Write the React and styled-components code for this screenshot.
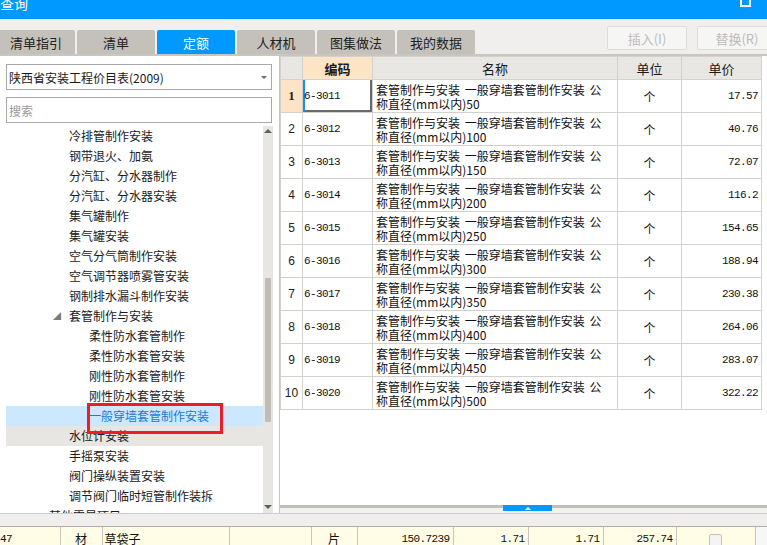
import React from 'react';
import styled, { createGlobalStyle } from 'styled-components';

const GlobalStyle = createGlobalStyle`
  html, body { margin: 0; padding: 0; width: 767px; height: 545px; overflow: hidden; background: #fff; }
  body { font-family: "Noto Sans CJK SC", "Noto Sans", sans-serif; font-size: 12px; color: #1a1a1a; }
  * { box-sizing: border-box; }
`;

const Window = styled.div`
  width: 767px; height: 545px; display: flex; flex-direction: column; overflow: hidden;
`;

const TitleBar = styled.div`
  flex: none; height: 19px; background: #0099ff; display: flex; justify-content: space-between;
  align-items: flex-start; overflow: hidden;
`;
const Title = styled.div`
  color: #fff; font-size: 14px; line-height: 14px; margin-top: -4px; margin-left: 0;
`;
const MaxIcon = styled.div`
  width: 11px; height: 10px; border: 2px solid #fff; margin-top: -3px; margin-right: 16px;
`;

const Toolbar = styled.div`
  flex: none; height: 37px; background: #f0efed; border-bottom: 2px solid #c9c6c0;
  display: flex; overflow: hidden;
`;
const TabList = styled.div`
  display: flex; align-self: flex-end; margin-left: -3px;
`;
const Tab = styled.div`
  width: 78px; height: 24px; margin-right: 2px; border-radius: 2px 2px 0 0;
  background: ${p => (p.$active ? '#0099ff' : '#c4c1ba')};
  color: ${p => (p.$active ? '#fff' : '#222')};
  font-size: 13px; display: flex; align-items: center; justify-content: center;
`;
const ButtonGroup = styled.div`
  margin-left: auto; margin-top: 7px; margin-right: -10px; display: flex; gap: 10px; align-self: flex-start;
`;
const ToolButton = styled.div`
  width: 80px; height: 24px; border: 1px solid #dcdcdc; border-radius: 2px; background: #f6f6f5;
  color: #bcbcbc; font-size: 13px; display: flex; align-items: center; justify-content: center;
`;

const Main = styled.div`
  flex: none; height: 457px; display: flex;
`;

const LeftPanel = styled.div`
  width: 280px; flex: none; border-right: 1px solid #c8c6c2; background: #fff;
  padding: 8px 6px 0 6px; display: flex; flex-direction: column;
`;
const SelectBox = styled.div`
  height: 26px; margin-right: 1px; border: 1px solid #a9a9a9; display: flex; align-items: center;
  padding-left: 2px; font-size: 12px; color: #1a1a1a;
`;
const SelectArrow = styled.span`
  margin-left: auto; margin-right: 4px; width: 0; height: 0;
  border-left: 3px solid transparent; border-right: 3px solid transparent; border-top: 3px solid #666;
`;
const SearchBox = styled.div`
  height: 26px; margin-top: 7px; margin-right: 1px; border: 1px solid #a9a9a9; display: flex; align-items: center;
  padding-left: 2px; font-size: 12px; color: #9a9a9a;
`;
const Tree = styled.div`
  flex: 1; margin-top: 3px; display: flex; min-height: 0;
`;
const TreeList = styled.div`
  flex: 1; overflow: hidden;
`;
const TreeRow = styled.div`
  height: 20px; line-height: 20px; white-space: nowrap; position: relative;
  padding-left: ${p => 63 + p.$level * 20}px;
  background: ${p => (p.$selected ? '#cce8ff' : p.$hover ? '#e8e6e3' : 'transparent')};
  color: ${p => (p.$selected ? '#1a7ad6' : '#1a1a1a')};
`;
const Caret = styled.span`
  display: inline-block; width: 16px; margin-left: -16px; font-size: 8px; color: #7a7a7a;
  vertical-align: top; line-height: 20px;
`;
const Annotation = styled.div`
  position: absolute; z-index: 2; left: 81px; top: -3px; width: 136px; height: 31px; border: 3px solid #ee1c25;
`;
const ScrollBar = styled.div`
  width: 10px; flex: none; background: #e8e6e3; display: flex; flex-direction: column; align-items: center;
`;
const ArrowUp = styled.div`
  margin-top: 3px; width: 0; height: 0;
  border-left: 4px solid transparent; border-right: 4px solid transparent; border-bottom: 4px solid #5f5f5f;
`;
const ScrollThumb = styled.div`
  margin-top: ${p => p.$offset}px; width: 6px; height: ${p => p.$size}px; background: #c0bdb7; border-radius: 1px;
`;
const ArrowDown = styled.div`
  margin-top: auto; margin-bottom: 4px; width: 0; height: 0;
  border-left: 4px solid transparent; border-right: 4px solid transparent; border-top: 4px solid #5f5f5f;
`;

const RightPanel = styled.div`
  flex: 1; display: flex; flex-direction: column; min-width: 0;
`;
const GridArea = styled.div`
  flex: 1; background: #fff; overflow: hidden;
`;
const Grid = styled.table`
  border-collapse: collapse; table-layout: fixed; width: 481px;
`;
const Col = styled.col`
  width: ${p => p.$w}px;
`;
const HeadRow = styled.tr`
  height: 23px;
`;
const HeadCell = styled.th`
  border: 1px solid #d4d1cc; padding: 0; font-size: 13px;
  font-weight: ${p => (p.$bold ? 700 : 400)};
  background: ${p => (p.$hl ? '#fde4c4' : '#e9e7e4')}; color: #1a1a1a; text-align: center;
`;
const BodyRow = styled.tr`
  height: 33px;
`;
const NumCell = styled.td`
  border: 1px solid #d4d1cc; padding: 0; text-align: center; vertical-align: middle;
  background: ${p => (p.$current ? '#fde4c4' : '#fff')};
  font-family: ${p => (p.$current ? '"Liberation Serif", serif' : '"Liberation Sans", sans-serif')};
  font-weight: ${p => (p.$current ? 700 : 400)};
  font-size: ${p => (p.$current ? '13px' : '12px')}; color: #222;
`;
const CodeCell = styled.td`
  border: 1px solid #d4d1cc; padding: 0 0 0 1px; vertical-align: middle;
  font-family: "Liberation Mono", "DejaVu Sans Mono", monospace; font-size: 11px; letter-spacing: -0.6px; color: #111;
  box-shadow: ${p => (p.$current ? 'inset 2px 0 0 #1a8cff, inset -2px -2px 0 #6a6a6a' : 'none')};
`;
const NameCell = styled.td`
  border: 1px solid #d4d1cc; padding: 1px 0 0 3px; vertical-align: middle; font-size: 12px; line-height: 14px;
  word-spacing: 2px; color: #111; white-space: nowrap; overflow: hidden;
`;
const UnitCell = styled.td`
  border: 1px solid #d4d1cc; padding: 0; text-align: center; vertical-align: middle; font-size: 12px; color: #111;
`;
const PriceCell = styled.td`
  border: 1px solid #d4d1cc; padding: 0 3px 0 0; text-align: right; vertical-align: middle;
  font-family: "Liberation Mono", "DejaVu Sans Mono", monospace; font-size: 11px; letter-spacing: -0.6px; color: #111;
`;

const Splitter = styled.div`
  flex: none; height: 8px; position: relative; background: #f3f2f0; border-top: 3px solid #c2bfb8;
`;
const SplitHandle = styled.div`
  position: absolute; top: -3px; left: 223px; width: 49px; height: 6px; background: #0099ff;
  display: flex; align-items: center; justify-content: center;
`;
const HandleArrow = styled.div`
  width: 0; height: 0; border-left: 3px solid transparent; border-right: 3px solid transparent;
  border-bottom: 3px solid #fff;
`;

const BottomPane = styled.div`
  flex: 1; border-top: 1px solid #d0cdc8; display: flex; flex-direction: column; overflow: hidden;
`;
const BottomBand = styled.div`
  flex: none; height: 13px; background: #f0efed; border-bottom: 1px solid #b0ada7;
`;
const BottomGrid = styled.table`
  border-collapse: collapse; table-layout: fixed; width: 767px;
`;
const BottomRow = styled.tr`
  height: 24px;
`;
const BCell = styled.td`
  border-right: 1px solid #c8c5bf;
  padding: ${p => (p.$align === 'right' ? '0 3px 0 0' : p.$align === 'left' ? `0 0 0 ${p.$flush ? 0 : 2}px` : '0')};
  background: ${p => (p.$blank ? '#f7f7f5' : '#fffde5')}; line-height: 24px; vertical-align: top;
  text-align: ${p => p.$align || 'center'}; white-space: nowrap; overflow: hidden;
  font-family: ${p => (p.$mono ? '"Liberation Mono", "DejaVu Sans Mono", monospace' : '"Noto Sans CJK SC", sans-serif')};
  font-size: ${p => (p.$mono ? '11px' : '12px')}; letter-spacing: ${p => (p.$mono ? '-0.6px' : '0')}; color: #111;
`;
const CheckBox = styled.span`
  display: inline-block; width: 13px; height: 14px; margin-top: 7px; border: 1px solid #c2c2c2;
  border-radius: 2px; background: #f4f4f4; vertical-align: top;
`;

const tabs = ['清单指引', '清单', '定额', '人材机', '图集做法', '我的数据'];

const treeItems = [
  { t: '冷排管制作安装', l: 0 },
  { t: '钢带退火、加氨', l: 0 },
  { t: '分汽缸、分水器制作', l: 0 },
  { t: '分汽缸、分水器安装', l: 0 },
  { t: '集气罐制作', l: 0 },
  { t: '集气罐安装', l: 0 },
  { t: '空气分气筒制作安装', l: 0 },
  { t: '空气调节器喷雾管安装', l: 0 },
  { t: '钢制排水漏斗制作安装', l: 0 },
  { t: '套管制作与安装', l: 0, open: true },
  { t: '柔性防水套管制作', l: 1 },
  { t: '柔性防水套管安装', l: 1 },
  { t: '刚性防水套管制作', l: 1 },
  { t: '刚性防水套管安装', l: 1 },
  { t: '一般穿墙套管制作安装', l: 1, selected: true },
  { t: '水位计安装', l: 0, hover: true },
  { t: '手摇泵安装', l: 0 },
  { t: '阀门操纵装置安装', l: 0 },
  { t: '调节阀门临时短管制作装拆', l: 0 },
  { t: '其他零星项目', l: -1 },
];

const rows = [
  ['6-3011', '50', '17.57'],
  ['6-3012', '100', '40.76'],
  ['6-3013', '150', '72.07'],
  ['6-3014', '200', '116.2'],
  ['6-3015', '250', '154.65'],
  ['6-3016', '300', '188.94'],
  ['6-3017', '350', '230.38'],
  ['6-3018', '400', '264.06'],
  ['6-3019', '450', '283.07'],
  ['6-3020', '500', '322.22'],
];

export default function App() {
  return (
    <Window>
      <GlobalStyle />
      <TitleBar>
        <Title>查询</Title>
        <MaxIcon />
      </TitleBar>
      <Toolbar>
        <TabList>
          {tabs.map(t => (
            <Tab key={t} $active={t === '定额'}>{t}</Tab>
          ))}
        </TabList>
        <ButtonGroup>
          <ToolButton>插入(I)</ToolButton>
          <ToolButton>替换(R)</ToolButton>
        </ButtonGroup>
      </Toolbar>
      <Main>
        <LeftPanel>
          <SelectBox>
            陕西省安装工程价目表(2009)
            <SelectArrow />
          </SelectBox>
          <SearchBox>搜索</SearchBox>
          <Tree>
            <TreeList>
              {treeItems.map(it => (
                <TreeRow key={it.t} $level={it.l} $selected={it.selected} $hover={it.hover}>
                  {it.open && <Caret>◢</Caret>}
                  {it.t}
                  {it.selected && <Annotation />}
                </TreeRow>
              ))}
            </TreeList>
            <ScrollBar>
              <ArrowUp />
              <ScrollThumb $offset={145} $size={144} />
              <ArrowDown />
            </ScrollBar>
          </Tree>
        </LeftPanel>
        <RightPanel>
          <GridArea>
            <Grid>
              <colgroup>
                <Col $w={22} />
                <Col $w={70} />
                <Col $w={245} />
                <Col $w={64} />
                <Col $w={80} />
              </colgroup>
              <thead>
                <HeadRow>
                  <HeadCell />
                  <HeadCell $hl $bold>编码</HeadCell>
                  <HeadCell>名称</HeadCell>
                  <HeadCell>单位</HeadCell>
                  <HeadCell>单价</HeadCell>
                </HeadRow>
              </thead>
              <tbody>
                {rows.map((r, i) => (
                  <BodyRow key={r[0]}>
                    <NumCell $current={i === 0}>{i + 1}</NumCell>
                    <CodeCell $current={i === 0}>{r[0]}</CodeCell>
                    <NameCell>
                      套管制作与安装 一般穿墙套管制作安装 公
                      <br />
                      称直径(mm以内){r[1]}
                    </NameCell>
                    <UnitCell>个</UnitCell>
                    <PriceCell>{r[2]}</PriceCell>
                  </BodyRow>
                ))}
              </tbody>
            </Grid>
          </GridArea>
          <Splitter>
            <SplitHandle>
              <HandleArrow />
            </SplitHandle>
          </Splitter>
        </RightPanel>
      </Main>
      <BottomPane>
        <BottomBand />
        <BottomGrid>
          <colgroup>
            <Col $w={60} />
            <Col $w={42} />
            <Col $w={127} />
            <Col $w={82} />
            <Col $w={46} />
            <Col $w={96} />
            <Col $w={75} />
            <Col $w={75} />
            <Col $w={73} />
            <Col $w={79} />
            <Col $w={12} />
          </colgroup>
          <tbody>
            <BottomRow>
              <BCell $align="left" $flush $mono>47</BCell>
              <BCell>材</BCell>
              <BCell $align="left">草袋子</BCell>
              <BCell />
              <BCell>片</BCell>
              <BCell $align="right" $mono>150.7239</BCell>
              <BCell $align="right" $mono>1.71</BCell>
              <BCell $align="right" $mono>1.71</BCell>
              <BCell $align="right" $mono>257.74</BCell>
              <BCell><CheckBox /></BCell>
              <BCell $blank />
            </BottomRow>
          </tbody>
        </BottomGrid>
      </BottomPane>
    </Window>
  );
}
